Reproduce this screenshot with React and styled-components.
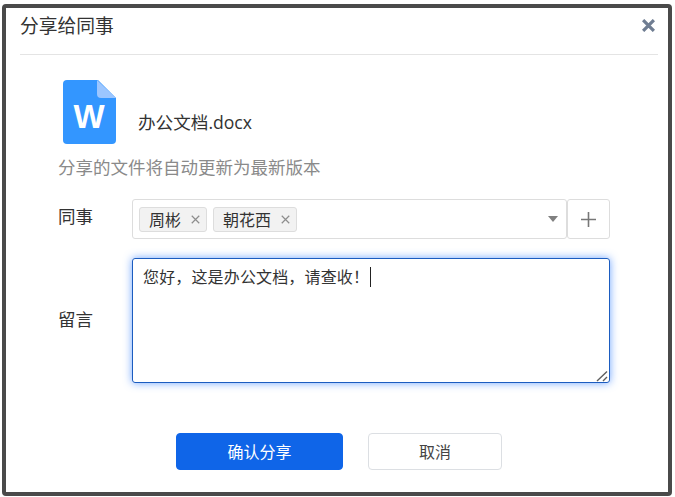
import React from 'react';
import styled, { createGlobalStyle } from 'styled-components';

const GlobalStyle = createGlobalStyle`
  html, body {
    margin: 0;
    padding: 0;
    background: #fff;
  }

  body {
    font-family: "Open Sans", "Noto Sans CJK SC", sans-serif;
    color: #333;
  }
`;

const Dialog = styled.div`
  box-sizing: border-box;
  width: 670px;
  height: 492px;
  margin: 4px 0 0 2px;
  border: 4px solid #4a4a4a;
  border-radius: 4px;
  background: #fff;
`;

const Header = styled.header`
  box-sizing: content-box;
  display: flex;
  align-items: center;
  justify-content: space-between;
  height: 38px;
  margin: 0 10px 0 14px;
  padding: 0 3px 8px 0;
  border-bottom: 1px solid #e4e4e4;
`;

const Title = styled.h1`
  margin: 0 0 2px;
  font-size: 18.8px;
  font-weight: 400;
  line-height: 26px;
  color: #333;
`;

const CloseButton = styled.svg`
  display: block;
  width: 13px;
  height: 13px;
  margin-bottom: 3px;
  stroke: #6f7d92;
  stroke-width: 3;
`;

const Body = styled.div`
  padding: 25px 52px 0;
`;

const FileRow = styled.div`
  display: flex;
  align-items: flex-end;
  gap: 22px;
  margin-left: 5px;
`;

const FileName = styled.span`
  margin-bottom: 9px;
  font-size: 17.6px;
  line-height: 26px;
  color: #333;
`;

const Hint = styled.p`
  margin: 10px 0 18px;
  font-size: 17.5px;
  line-height: 27px;
  color: #8a8a8a;
`;

const Form = styled.div`
  display: grid;
  grid-template-columns: 74px 478px;
  row-gap: 19px;
  align-items: center;
`;

const Label = styled.label`
  font-size: 17.5px;
  line-height: 26px;
  color: #333;
  margin-bottom: ${({ $lift }) => $lift || 0}px;
`;

const PickerRow = styled.div`
  display: flex;
  height: 40px;
`;

const Select = styled.div`
  box-sizing: border-box;
  flex: 1;
  display: flex;
  align-items: center;
  gap: 6px;
  padding: 0 8px 0 6px;
  border: 1px solid #ddd;
  border-radius: 3px;
`;

const Tag = styled.span`
  box-sizing: border-box;
  display: flex;
  align-items: center;
  justify-content: space-between;
  height: 25px;
  padding: 0 6px 0 9px;
  gap: 10px;
  border: 1px solid #ddd;
  border-radius: 3px;
  background: #f2f2f2;
  font-size: 16px;
  color: #333;
`;

const TagClose = styled.svg`
  display: block;
  width: 9px;
  height: 9px;
  stroke: #8d8d8d;
  stroke-width: 1.6;
`;

const Caret = styled.span`
  width: 0;
  height: 0;
  margin-left: auto;
  border-left: 5px solid transparent;
  border-right: 5px solid transparent;
  border-top: 6px solid #808080;
`;

const AddButton = styled.div`
  box-sizing: border-box;
  width: 43px;
  display: flex;
  align-items: center;
  justify-content: center;
  border: 1px solid #ddd;
  border-radius: 3px;
`;

const AddIcon = styled.svg`
  display: block;
  width: 17px;
  height: 17px;
  stroke: #777;
  stroke-width: 1.6;
`;

const MessageBox = styled.div`
  position: relative;
  box-sizing: border-box;
  width: 478px;
  height: 125px;
  padding: 6px 10px;
  border: 1px solid #1b5cc0;
  border-radius: 3px;
  box-shadow: 0 0 8px rgba(50, 125, 255, 0.7);
  font-size: 16px;
  line-height: 24px;
  letter-spacing: 0.15px;
  color: #333;
`;

const TextCursor = styled.span`
  display: inline-block;
  width: 1px;
  height: 20px;
  margin-left: 1px;
  vertical-align: -4px;
  background: #222;
`;

const ResizeGrip = styled.svg`
  position: absolute;
  right: 1px;
  bottom: 0;
  width: 12px;
  height: 12px;
  stroke: #5f5f5f;
  stroke-width: 1.4;
`;

const Footer = styled.footer`
  display: flex;
  gap: 25px;
  margin: 50px 0 0 118px;
`;

const Button = styled.button`
  box-sizing: border-box;
  width: ${({ $primary }) => ($primary ? 167 : 134)}px;
  height: 37px;
  padding: 0 0 2px;
  border: 1px solid ${({ $primary }) => ($primary ? '#0f65e8' : '#dcdfe3')};
  border-radius: 4px;
  background: ${({ $primary }) => ($primary ? '#0f65e8' : '#fff')};
  color: ${({ $primary }) => ($primary ? '#fff' : '#444')};
  font-family: inherit;
  font-size: 16px;
`;

const Cross = (props) => (
  <svg viewBox="0 0 12 12" fill="none" {...props}>
    <path d="M1 1l10 10M11 1L1 11" />
  </svg>
);

const WordIcon = () => (
  <svg width="53" height="64" viewBox="0 0 53 64">
    <path
      d="M4 0h31l18 18v42a4 4 0 0 1-4 4H4a4 4 0 0 1-4-4V4a4 4 0 0 1 4-4z"
      fill="#3396ff"
    />
    <path d="M34 0l19 18H38a4 4 0 0 1-4-4z" fill="#9cc6ff" />
    <text
      x="26"
      y="48"
      textAnchor="middle"
      fill="#fff"
      fontFamily="Liberation Sans, sans-serif"
      fontWeight="700"
      fontSize="33"
    >
      W
    </text>
  </svg>
);

const App = () => {
  return (
    <>
      <GlobalStyle />
      <Dialog>
        <Header>
          <Title>分享给同事</Title>
          <CloseButton as={Cross} />
        </Header>
        <Body>
          <FileRow>
            <WordIcon />
            <FileName>办公文档.docx</FileName>
          </FileRow>
          <Hint>分享的文件将自动更新为最新版本</Hint>
          <Form>
            <Label $lift={6}>同事</Label>
            <PickerRow>
              <Select>
                <Tag>
                  周彬
                  <TagClose as={Cross} />
                </Tag>
                <Tag>
                  朝花西
                  <TagClose as={Cross} />
                </Tag>
                <Caret />
              </Select>
              <AddButton>
                <AddIcon viewBox="0 0 17 17" fill="none">
                  <path d="M8.5 1v15M1 8.5h15" />
                </AddIcon>
              </AddButton>
            </PickerRow>
            <Label $lift={4}>留言</Label>
            <MessageBox>
              您好，这是办公文档，请查收！
              <TextCursor />
              <ResizeGrip viewBox="0 0 12 12" fill="none">
                <path d="M1 11L11 1.5M7 11l4-4" />
              </ResizeGrip>
            </MessageBox>
          </Form>
          <Footer>
            <Button $primary>确认分享</Button>
            <Button>取消</Button>
          </Footer>
        </Body>
      </Dialog>
    </>
  );
};

export default App;
